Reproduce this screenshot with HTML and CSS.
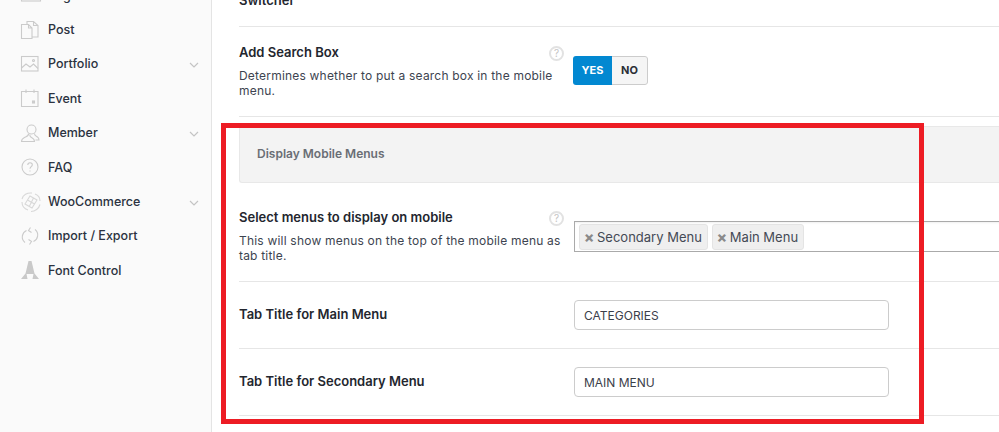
FILE: index.html
```html
<!DOCTYPE html>
<html lang="en">
<head>
<meta charset="utf-8">
<title>Mobile menu options</title>
<link rel="stylesheet" href="styles.css">
</head>
<body>
<div class="shell">
  <aside class="sidebar">
    <ul class="nav">
      <li class="nav-item"><svg class="nav-icon" viewBox="0 0 18 18"><rect x="0.500" y="3" width="19" height="12"/></svg><span class="nav-label">Page</span></li>
      <li class="nav-item"><svg class="nav-icon" viewBox="0 0 18 18"><path d="M.5 3.500h7l3.500 3.500v10.500H.5zM7.500 3.500V7H11M6 3.500V.5h6.500l4.500 4v11.500h-6M12.500.5V4.500H17"/></svg><span class="nav-label">Post</span></li>
      <li class="nav-item"><svg class="nav-icon" viewBox="0 0 18 18"><rect x="0.500" y="1.500" width="16.500" height="14.500"/><path d="M.5 13l4.500-4 4 3 3.500-3 4.500 4.500"/><circle cx="12.500" cy="5.500" r="1"/></svg><span class="nav-label">Portfolio</span><svg class="chev" viewBox="0 0 10 6"><path d="M1 1l4 4 4-4"/></svg></li>
      <li class="nav-item"><svg class="nav-icon" viewBox="0 0 18 18"><path d="M.5 2.500h16.500v15H.5zM5 .5v3.500M13 .5v3.500"/><rect x="11.500" y="12" width="2" height="2"/></svg><span class="nav-label">Event</span></li>
      <li class="nav-item"><svg class="nav-icon" viewBox="0 0 18 18"><circle cx="10.500" cy="5.500" r="4.500"/><path d="M7.500 9.500c.5 2.500-2 3-4 4-2 1-3 2-3 4h13c0-2-1-3-3-4-1-.5-2-1.500-1.500-3M13.500 9.500c-.3 2 1.500 2.500 3 3.500 1 .7 1.500 1.500 1.500 3h-3.500"/></svg><span class="nav-label">Member</span><svg class="chev" viewBox="0 0 10 6"><path d="M1 1l4 4 4-4"/></svg></li>
      <li class="nav-item"><svg class="nav-icon" viewBox="0 0 18 18"><circle cx="9" cy="9" r="8"/><path d="M6.800 7c0-3 4.500-3 4.500-.2 0 1.800-2.300 2-2.300 4M9 12.500v1"/></svg><span class="nav-label">FAQ</span></li>
      <li class="nav-item"><svg class="nav-icon nav-icon-wide" viewBox="0 0 20 20"><path d="M11 1C6 .5 2 3 1 7M1 10c0 4 3 7 6 8M10 19.500c4 0 8-3 9-7M19 9c0-3-2-6-5-7"/><path d="M9 4l7 4-5 8-7-4zM6.500 8l7 4M12.500 6l-4 8"/></svg><span class="nav-label">WooCommerce</span><svg class="chev" viewBox="0 0 10 6"><path d="M1 1l4 4 4-4"/></svg></li>
      <li class="nav-item"><svg class="nav-icon" viewBox="0 0 18 18"><path d="M5.500 3.500C1 5.500-.5 12 4 15.500M12.500 14.500c4.500-2 6-8.500 1.500-12M9.500.5l-2 3 3 2M8.500 17.500l2-3-3-2"/></svg><span class="nav-label">Import / Export</span></li>
      <li class="nav-item"><svg class="nav-icon nav-icon-solid" viewBox="0 0 18 18"><path d="M7.500 0h3l3 12.500 4.500 5.500H11.500l1-5h-7l1 5H0l4.500-5.500z"/></svg><span class="nav-label">Font Control</span></li>
    </ul>
  </aside>
  <main class="content">
    <section class="row row-first">
      <div class="row-info"><h3 class="row-title">Switcher</h3></div>
    </section>
    <section class="row row-search">
      <div class="row-info">
        <h3 class="row-title">Add Search Box</h3>
        <p class="row-desc">Determines whether to put a search box in the mobile menu.</p>
        <span class="help">?</span>
      </div>
      <div class="toggle"><span class="toggle-on">YES</span><span class="toggle-off">NO</span></div>
    </section>
    <div class="section-head">Display Mobile Menus</div>
    <section class="row row-select">
      <div class="row-info">
        <h3 class="row-title">Select menus to display on mobile</h3>
        <p class="row-desc">This will show menus on the top of the mobile menu as tab title.</p>
        <span class="help">?</span>
      </div>
      <div class="multi">
        <span class="tag"><span class="tag-x">×</span>Secondary Menu</span>
        <span class="tag"><span class="tag-x">×</span>Main Menu</span>
      </div>
    </section>
    <section class="row row-input">
      <div class="row-info"><h3 class="row-title">Tab Title for Main Menu</h3></div>
      <input class="text-input" type="text" value="CATEGORIES">
    </section>
    <section class="row row-input">
      <div class="row-info"><h3 class="row-title">Tab Title for Secondary Menu</h3></div>
      <input class="text-input" type="text" value="MAIN MENU">
    </section>
  </main>
</div>
<div class="highlight"></div>
</body>
</html>
```
FILE: styles.css
```css
* { box-sizing: border-box; }
html, body { margin: 0; height: 100%; overflow: hidden; background: #fff; }
body { position: relative; font-family: Inter, "Liberation Sans", sans-serif; color: #2c2f36; }
.shell { display: flex; height: 472px; margin-top: -40px; }
.sidebar { flex: 0 0 212px; background: #fafafa; border-right: 1px solid #e4e4e4; }
.nav { list-style: none; margin: 0; padding: 18px 0 0 21px; }
.nav-item { display: flex; align-items: center; height: 34.4px; padding-right: 12px; }
.nav-icon { width: 18px; height: 18px; flex: none; margin-right: 9px; fill: none; stroke: #cbcbcb; stroke-width: 1.100; overflow: visible; }
.nav-icon-wide { width: 20px; height: 20px; margin-right: 7px; stroke: #d8d8d8; }
.nav-icon-solid { fill: #c9c9c9; stroke: none; }
.nav-label { font-size: 12.500px; font-weight: 500; color: #2b3240; flex: 1; }
.chev { width: 10px; height: 6px; fill: none; stroke: #c4c4c4; stroke-width: 1.200; margin-top: 3px; }
.content { flex: 1; padding-left: 27px; min-width: 0; }
.row { display: flex; border-bottom: 1px solid #e6e6e6; }
.row-first { height: 67px; align-items: flex-end; padding-bottom: 17px; }
.row-search { height: 90px; padding-top: 17px; }
.row-select { height: 99px; padding-top: 26px; }
.row-input { height: 67px; align-items: center; }
.row-info { position: relative; flex: 0 0 335px; }
.row-title { margin: 0; font-size: 13px; font-weight: 600; line-height: 17px; color: #23262e; }
.row-input .row-title { margin-top: -1px; }
.row-desc { margin: 7px 0 0; width: 325px; font-size: 12px; letter-spacing: .2px; line-height: 15px; color: #3d4450; }
.help { position: absolute; top: 2px; right: 10px; width: 15px; height: 15px; border: 2px solid #e2e2e2; border-radius: 50%; font-size: 10px; line-height: 11px; text-align: center; color: #c4c4c4; }
.toggle { display: flex; height: 29px; margin: 12px 0 0 -1px; border-radius: 3px; overflow: hidden; font-size: 11px; font-weight: 700; line-height: 27px; }
.toggle-on { width: 39px; background: #0288d1; color: #fff; text-align: center; line-height: 29px; }
.toggle-off { width: 36px; background: #f5f5f5; border: 1px solid #ccc; border-left: 0; border-radius: 0 3px 3px 0; text-align: center; color: #2c2f36; }
.section-head { height: 57px; margin-top: 9px; padding-left: 17px; background: #f3f3f3; border: 1px solid #e8e8e8; border-right: 0; border-radius: 3px 0 0 3px; font-size: 12px; font-weight: 600; line-height: 54px; color: #6a6e75; }
.multi { display: flex; align-items: center; gap: 4px; flex: none; width: 440px; height: 31px; margin-top: 12px; padding: 0 4px; border: 1px solid #aaa; border-right: 0; font-size: 13px; color: #444a55; box-shadow: inset 0 2px 3px -2px rgba(0,0,0,.12); }
.tag { display: flex; align-items: center; height: 26px; padding: 0 5px; background: #efefef; border: 1px solid #e4e4e4; border-radius: 3px; }
.tag-x { width: 13px; margin-left: -1px; font-size: 15px; font-weight: 800; color: #8a8a8a; }
.text-input { width: 315px; height: 30px; padding: 0 9px; border: 1px solid #ccc; border-radius: 4px; font: 400 12px Inter, "Liberation Sans", sans-serif; color: #3b404a; }
.highlight { position: absolute; left: 221px; top: 123px; width: 703px; height: 301px; border: 5px solid #ed1c24; pointer-events: none; }
```
